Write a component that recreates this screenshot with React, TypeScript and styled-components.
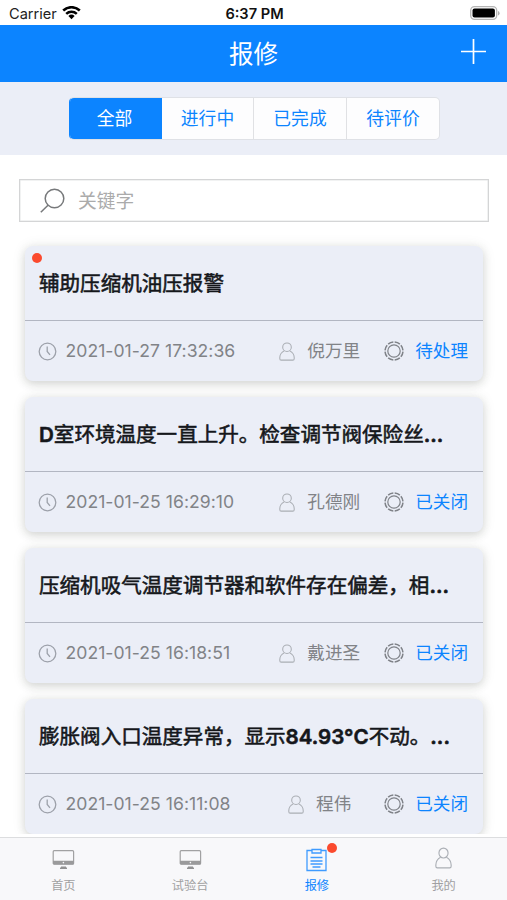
import React from "react";
import styled, { createGlobalStyle, css } from "styled-components";

const GlobalStyle = createGlobalStyle`
  * { box-sizing: border-box; }
  body { margin: 0; background: #fff; }
`;

const BLUE = "#0c84ff";
const PALE = "#ebeef7";

const Screen = styled.div`
  width: 507px;
  height: 900px;
  display: flex;
  flex-direction: column;
  overflow: hidden;
  background: #fff;
  font-family: Inter, "Noto Sans CJK SC", sans-serif;
`;

const StatusBar = styled.div`
  flex: 0 0 25px;
  display: grid;
  grid-template-columns: 1fr auto 1fr;
  align-items: center;
  padding: 2px 7px 0 9px;
  color: #222;
  font-size: 14.6px;
  line-height: 20px;
`;
const Carrier = styled.div`
  display: flex;
  align-items: center;
  gap: 5px;
`;
const Clock = styled.div`
  font-weight: 600;
  font-size: 14.6px;
  color: #111;
`;
const Battery = styled.svg`
  justify-self: end;
`;

const Header = styled.header`
  flex: 0 0 56.5px;
  display: grid;
  grid-template-columns: 1fr auto 1fr;
  align-items: center;
  padding: 1px 21px 0;
  background: ${BLUE};
  color: #fff;
`;
const Title = styled.h1`
  grid-column: 2;
  margin: 0;
  padding-top: 1px;
  font-size: 24.5px;
  line-height: 36px;
  font-weight: 400;
`;
const AddButton = styled.button`
  justify-self: end;
  display: flex;
  padding: 0;
  margin-bottom: 4px;
  border: 0;
  background: none;
`;

const FilterBand = styled.div`
  flex: 0 0 73px;
  display: flex;
  justify-content: center;
  align-items: flex-start;
  padding: 15px 0 0 2px;
  background: ${PALE};
`;
const Segments = styled.div`
  display: grid;
  grid-template-columns: 92px 92px 93px 92px;
  height: 43px;
  border-radius: 5px;
  overflow: hidden;
  border: 1px solid #dfe1e6;
  border-left-color: ${BLUE};
  background: #fdfdfe;
`;
const Segment = styled.button<{ $active?: boolean }>`
  margin: 0;
  padding: 0;
  border: 0;
  border-right: 1px solid #e0e1e4;
  background: transparent;
  color: ${BLUE};
  font: inherit;
  font-size: 17.8px;
  line-height: 39px;
  &:last-child { border-right: 0; }
  ${(p) => p.$active && css`
    background: ${BLUE};
    border-color: ${BLUE};
    color: #fff;
    margin: -1px 0;
    padding-right: 2px;
  `}
`;

const SearchBox = styled.div`
  flex: 0 0 43px;
  margin: 24.5px 18px 0 19px;
  display: flex;
  align-items: center;
  gap: 13px;
  padding-left: 20px;
  border: 1.5px solid #d4d5d6;
  box-shadow: inset 0 0 0 0.5px #e4e5e6;
  color: #ababab;
  font-size: 18.8px;
  line-height: 28px;
`;
const Placeholder = styled.span`
  padding-top: 2px;
`;

const List = styled.main`
  flex: 1 1 0;
  min-height: 0;
  overflow: hidden;
  display: flex;
  flex-direction: column;
  gap: 16px;
  padding: 24px 24px 0 25px;
`;
const Card = styled.article`
  position: relative;
  flex: 0 0 135px;
  display: flex;
  flex-direction: column;
  border-radius: 8px;
  background: ${PALE};
  box-shadow: 0 3px 8px rgba(40, 50, 40, 0.15), 0 1px 14px rgba(60, 70, 50, 0.1);
`;
const CardTitle = styled.h2`
  flex: 0 0 75px;
  min-height: 0;
  margin: 0;
  padding: 0 14px;
  border-bottom: 1.5px solid #b2b6c2;
  color: #15171b;
  font-size: 20.55px;
  line-height: 76px;
  font-weight: 400;
  -webkit-text-stroke: 0.55px #15171b;
  white-space: nowrap;
`;
const Strong = styled.b`
  font-weight: 600;
`;
const CardMeta = styled.div`
  flex: 1;
  display: flex;
  align-items: center;
  padding: 0 15px 0 13px;
  color: #818387;
  font-size: 17.6px;
  line-height: 26px;
`;
const MetaIcon = styled.svg`
  flex: none;
  display: block;
`;
const Time = styled.time`
  margin-left: 8.5px;
  letter-spacing: 0.03px;
  white-space: nowrap;
`;
const Person = styled.div`
  margin-left: auto;
  width: 81px;
  display: flex;
  align-items: center;
  justify-content: center;
  gap: 12px;
  white-space: nowrap;
`;
const State = styled.div`
  margin-left: 24px;
  display: flex;
  align-items: center;
  gap: 11px;
  color: ${BLUE};
`;
const UnreadDot = styled.i<{ $top: number; $left: number }>`
  position: absolute;
  top: ${(p) => p.$top}px;
  left: ${(p) => p.$left}px;
  width: 10px;
  height: 10px;
  border-radius: 50%;
  background: #fb4a2e;
`;

const TabBar = styled.nav`
  flex: 0 0 63px;
  margin-top: 3.5px;
  display: grid;
  grid-template-columns: repeat(4, 1fr);
  border-top: 1.5px solid #dcdddf;
  background: #f8f8fa;
`;
const Tab = styled.a<{ $active?: boolean }>`
  display: flex;
  flex-direction: column;
  align-items: center;
  padding-top: 9px;
  color: ${(p) => (p.$active ? BLUE : "#a0a0a1")};
  font-size: 12.2px;
  line-height: 18px;
`;
const TabIcon = styled.span`
  position: relative;
  display: flex;
  align-items: flex-start;
  height: 26px;
  margin-bottom: 3.5px;
`;

const PersonIcon = ({ w = 16, h = 19 }: { w?: number; h?: number }) => (
  <MetaIcon width={w} height={h} viewBox="0 0 16 19" preserveAspectRatio="none" fill="none" stroke="#aaaeb4" strokeWidth="1.05">
    <circle cx="8" cy="5.2" r="4.3" />
    <path d="M5.3 8.9C2.5 10.3.8 12.8.8 15.6v1.1c0 .8.6 1.4 1.4 1.4h11.6c.8 0 1.4-.6 1.4-1.4v-1.1c0-2.8-1.7-5.3-4.5-6.7" />
  </MetaIcon>
);

const ClockIcon = () => (
  <MetaIcon width="19" height="19" viewBox="0 0 19 19" fill="none" stroke="#9da1aa" strokeWidth="1.3">
    <circle cx="9.5" cy="9.5" r="8.3" />
    <path d="M9.2 4.5v5l2.8 3.4" />
  </MetaIcon>
);

const StateIcon = () => (
  <MetaIcon width="20" height="20" viewBox="0 0 20 20" fill="none" stroke="#7f8288" strokeWidth="1.2">
    <circle cx="10" cy="10" r="6.2" />
    <circle cx="10" cy="10" r="9" strokeWidth="1.5" pathLength="80" strokeDasharray="8 2" strokeDashoffset="-1" />
  </MetaIcon>
);

const MonitorIcon = () => (
  <svg width="23" height="26" viewBox="0 0 23 26">
    <rect x="1.2" y="3.7" width="20.4" height="13.5" rx="1" fill="none" stroke="#a1a1a2" strokeWidth="1.2" />
    <path d="M1 13.8h20.8v2.5q0 1.2-1.2 1.2H2.2Q1 17.5 1 16.3z" fill="#9a9a9b" />
    <circle cx="11.4" cy="15.6" r=".8" fill="#f8f8fa" />
    <path d="M9 19.5h5v1h1V22H8v-1.5h1z" fill="#929293" />
  </svg>
);

const ClipboardIcon = () => (
  <svg width="21" height="26" viewBox="0 0 21 26" fill="none" stroke="#3f9bff" strokeWidth="1.3">
    <path d="M6 3.5H1v20h19v-20h-5" />
    <path d="M6 6V2.5h9V6z" />
    <path d="M4.5 10.5h12M4.5 14h12M4.5 17h12M6.5 20h8" />
  </svg>
);

type Job = { title: React.ReactNode; time: string; person: string; state: string; unread?: boolean };

const jobs: Job[] = [
  { title: "辅助压缩机油压报警", time: "2021-01-27 17:32:36", person: "倪万里", state: "待处理", unread: true },
  { title: <><Strong>D</Strong>室环境温度一直上升。检查调节阀保险丝<Strong>...</Strong></>, time: "2021-01-25 16:29:10", person: "孔德刚", state: "已关闭" },
  { title: <>压缩机吸气温度调节器和软件存在偏差，相<Strong>...</Strong></>, time: "2021-01-25 16:18:51", person: "戴进圣", state: "已关闭" },
  { title: <>膨胀阀入口温度异常，显示<Strong>84.93°C</Strong>不动。<Strong>...</Strong></>, time: "2021-01-25 16:11:08", person: "程伟", state: "已关闭" },
];

export default function App() {
  return (
    <Screen>
      <GlobalStyle />
      <StatusBar>
        <Carrier>
          Carrier
          <svg width="19" height="15" viewBox="0 0 19 15" fill="none" stroke="#000" strokeWidth="2.5">
            <path d="M1.2 4.5a12 12 0 0 1 16.6 0M4.2 7.8a7.7 7.7 0 0 1 10.6 0" />
            <path d="M9.5 13.2L6.4 10a4.5 4.5 0 0 1 6.2 0z" fill="#000" stroke="none" />
          </svg>
        </Carrier>
        <Clock>6:37 PM</Clock>
        <Battery width="30" height="15" viewBox="0 0 30 15">
          <rect x=".7" y=".7" width="26" height="12.6" rx="3.8" fill="#fff" stroke="#b5b5b5" strokeWidth="1.3" />
          <rect x="2.5" y="2.5" width="22.4" height="9" rx="2" fill="#000" />
          <path d="M28 5v4.5q1.6-.6 1.6-2.25T28 5z" fill="#b0b0b0" />
        </Battery>
      </StatusBar>
      <Header>
        <Title>报修</Title>
        <AddButton aria-label="新增">
          <svg width="25" height="25" viewBox="0 0 25 25" stroke="#fff" strokeWidth="1.7">
            <path d="M12.5 0v25M0 12.5h25" />
          </svg>
        </AddButton>
      </Header>
      <FilterBand>
        <Segments>
          <Segment $active>全部</Segment>
          <Segment>进行中</Segment>
          <Segment>已完成</Segment>
          <Segment>待评价</Segment>
        </Segments>
      </FilterBand>
      <SearchBox>
        <svg width="25" height="25" viewBox="0 0 25 25" fill="none" stroke="#77797b" strokeWidth="1.5">
          <circle cx="14.5" cy="10.5" r="9.3" />
          <path d="M8 17.2L.8 24.3" />
        </svg>
        <Placeholder>关键字</Placeholder>
      </SearchBox>
      <List>
        {jobs.map((job) => (
          <Card key={job.time}>
            {job.unread && <UnreadDot $top={6.5} $left={6.5} />}
            <CardTitle>{job.title}</CardTitle>
            <CardMeta>
              <ClockIcon />
              <Time>{job.time}</Time>
              <Person>
                <PersonIcon />
                {job.person}
              </Person>
              <State>
                <StateIcon />
                {job.state}
              </State>
            </CardMeta>
          </Card>
        ))}
      </List>
      <TabBar>
        <Tab>
          <TabIcon><MonitorIcon /></TabIcon>
          首页
        </Tab>
        <Tab>
          <TabIcon><MonitorIcon /></TabIcon>
          试验台
        </Tab>
        <Tab $active>
          <TabIcon>
            <ClipboardIcon />
            <UnreadDot $top={-4} $left={21} />
          </TabIcon>
          报修
        </Tab>
        <Tab>
          <TabIcon><PersonIcon w={17} h={22} /></TabIcon>
          我的
        </Tab>
      </TabBar>
    </Screen>
  );
}
